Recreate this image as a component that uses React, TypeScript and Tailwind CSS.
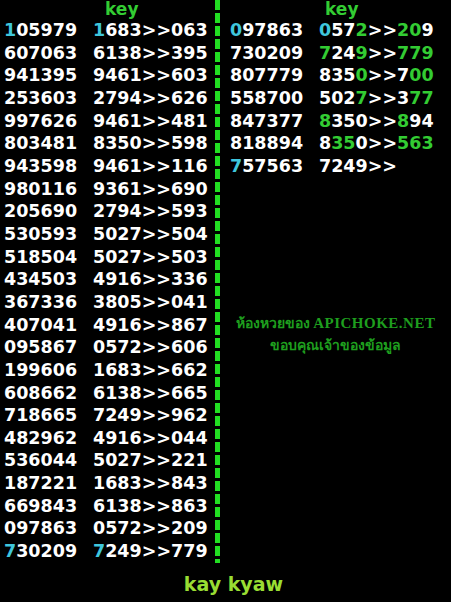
import React from "react";

type Seg = [string, "w" | "c" | "g"];

const leftRows: [string, string][] = [
  ["105979", "1683>>063"],
  ["607063", "6138>>395"],
  ["941395", "9461>>603"],
  ["253603", "2794>>626"],
  ["997626", "9461>>481"],
  ["803481", "8350>>598"],
  ["943598", "9461>>116"],
  ["980116", "9361>>690"],
  ["205690", "2794>>593"],
  ["530593", "5027>>504"],
  ["518504", "5027>>503"],
  ["434503", "4916>>336"],
  ["367336", "3805>>041"],
  ["407041", "4916>>867"],
  ["095867", "0572>>606"],
  ["199606", "1683>>662"],
  ["608662", "6138>>665"],
  ["718665", "7249>>962"],
  ["482962", "4916>>044"],
  ["536044", "5027>>221"],
  ["187221", "1683>>843"],
  ["669843", "6138>>863"],
  ["097863", "0572>>209"],
  ["730209", "7249>>779"],
];

// right side rows with coloured digits
const rightRows: [Seg[], Seg[]][] = [
  [[["0", "c"], ["97863", "w"]], [["0", "c"], ["57", "w"], ["2", "g"], [">>", "w"], ["20", "g"], ["9", "w"]]],
  [[["730209", "w"]], [["7", "g"], ["24", "w"], ["9", "g"], [">>", "w"], ["779", "g"]]],
  [[["807779", "w"]], [["835", "w"], ["0", "g"], [">>7", "w"], ["00", "g"]]],
  [[["558700", "w"]], [["502", "w"], ["7", "g"], [">>3", "w"], ["77", "g"]]],
  [[["847377", "w"]], [["8", "g"], ["350>>", "w"], ["8", "g"], ["94", "w"]]],
  [[["818894", "w"]], [["8", "w"], ["35", "g"], ["0>>", "w"], ["563", "g"]]],
  [[["7", "c"], ["57563", "w"]], [["7249>>", "w"]]],
];

const colorClass = {
  w: "text-white",
  c: "text-[#3fc6dc]",
  g: "text-[#33cc33]",
};

const Segs = ({ segs }: { segs: Seg[] }) => (
  <>
    {segs.map(([t, c], i) => (
      <span key={i} className={colorClass[c]}>
        {t}
      </span>
    ))}
  </>
);

const toSegs = (s: string, edge: boolean): Seg[] =>
  edge ? [[s[0], "c"], [s.slice(1), "w"]] : [[s, "w"]];

export default function App() {
  return (
    <div className="w-[451px] h-[602px] bg-black overflow-hidden font-['DejaVu_Sans',sans-serif] font-bold text-[17.5px] text-white">
      <div className="flex h-[563px]">
        {/* Left table */}
        <div className="w-[215px] pl-[4px]">
          <div className="h-[19px] pl-[101px] text-[#33cc33] text-[17px] leading-[19px]">key</div>
          {leftRows.map(([a, b], i) => {
            const edge = i === 0 || i === leftRows.length - 1;
            return (
              <div key={i} className="flex leading-[22.65px] whitespace-nowrap">
                <div className="w-[89px]">
                  <Segs segs={toSegs(a, edge)} />
                </div>
                <div>
                  <Segs segs={toSegs(b, edge)} />
                </div>
              </div>
            );
          })}
        </div>

        {/* Divider */}
        <div className="w-[5px] bg-[repeating-linear-gradient(to_bottom,#22dd22_0px,#22dd22_10px,transparent_10px,transparent_13px)]" />

        {/* Right table */}
        <div className="flex-1 flex flex-col">
          <div className="pl-[10px]">
            <div className="h-[19px] pl-[95px] text-[#33cc33] text-[17px] leading-[19px]">key</div>
            {rightRows.map(([a, b], i) => (
              <div key={i} className="flex leading-[22.65px] whitespace-nowrap">
                <div className="w-[89px]">
                  <Segs segs={a} />
                </div>
                <div>
                  <Segs segs={b} />
                </div>
              </div>
            ))}
          </div>
          <div className="mt-[134px] text-center text-[#1e9e1e] text-[14px] leading-[22px] font-bold font-['Noto_Sans','DejaVu_Sans',sans-serif]">
            <div>
              ห้องหวยของ <span className="font-['Liberation_Serif',serif] font-black text-[15px] tracking-[0.5px]">APICHOKE.NET</span>
            </div>
            <div>ขอบคุณเจ้าของข้อมูล</div>
          </div>
        </div>
      </div>

      {/* Footer */}
      <div className="flex justify-center pl-[16px] pt-[11px] text-[19px] leading-[20px] text-[#99dd33]">kay kyaw</div>
    </div>
  );
}
